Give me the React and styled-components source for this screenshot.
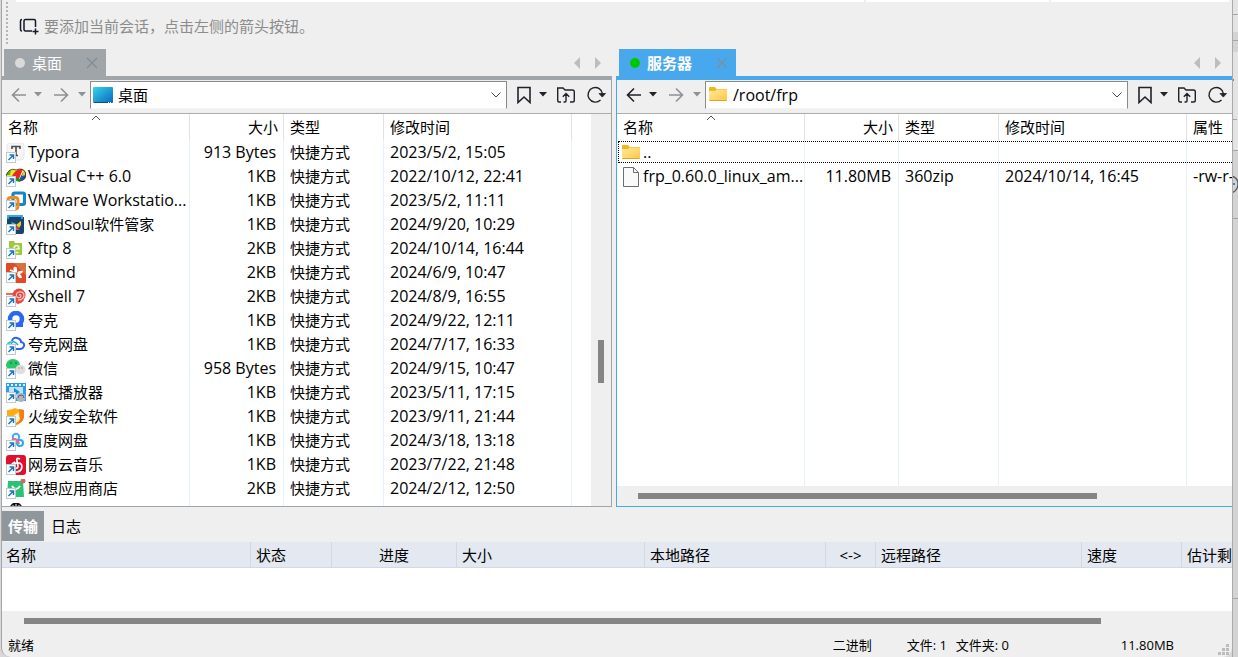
import React from "react";
import styled, { createGlobalStyle, css } from "styled-components";

const GlobalStyle = createGlobalStyle`
  * { box-sizing: border-box; }
  body { margin: 0; background: #d8d8d8; overflow: hidden; }
  button, select { font: inherit; color: inherit; }
`;

const Desktop = styled.div`
  display: flex;
  height: 100vh;
  padding-left: 1px;
  font: 15px/24px "Open Sans", "Noto Sans CJK SC", sans-serif;
  color: #000;
`;

const Window = styled.main`
  flex: 1;
  min-width: 0;
  display: flex;
  flex-direction: column;
  background: #efefef;
  border-left: 1px solid #a6a6a6;
  border-radius: 0 0 9px 9px;
  overflow: hidden;
`;

const Behind = styled.svg`
  flex: none;
  width: 6px;
  height: 657px;
`;

const TopStrip = styled.div`
  display: flex;
  gap: 2px;
  height: 2px;
  padding: 0 3px 0 14px;
`;

const StripPart = styled.div`
  flex: ${(p) => p.$grow};
  background: #fff;
`;

const SessionBar = styled.header`
  display: flex;
  align-items: center;
  gap: 4px;
  height: 47px;
  padding-left: 4px;
  color: #8c8c8c;
`;

const Grip = styled.span`
  align-self: flex-start;
  width: 2px;
  height: 43px;
  margin-right: 6px;
  background: repeating-linear-gradient(#b4b4b4 0 2px, transparent 2px 4px);
`;

const IconButton = styled.button`
  display: flex;
  align-items: center;
  justify-content: center;
  flex: none;
  width: ${(p) => p.$w}px;
  height: 24px;
  padding: 0;
  border: 0;
  background: none;
  color: ${(p) => (p.disabled ? "#8d9298" : "#20222a")};
`;

const Panes = styled.section`
  display: grid;
  grid-template-columns: 610fr 616fr;
  gap: 4px;
  flex: 1;
  min-height: 0;
`;

const Pane = styled.section`
  display: flex;
  flex-direction: column;
  min-width: 0;
  min-height: 0;
`;

const TabRow = styled.div`
  display: flex;
  align-items: center;
  justify-content: space-between;
  height: 27px;
  padding: 0 4px 0 ${(p) => p.$inset}px;
`;

const SessionTab = styled.div`
  display: flex;
  align-items: center;
  width: ${(p) => p.$w}px;
  height: 27px;
  padding: 1px 7px 0 11px;
  background: ${(p) => p.$color};
  color: #fff;
  font-weight: ${(p) => (p.$active ? 700 : 400)};
`;

const TabLabel = styled.button`
  display: flex;
  align-items: center;
  gap: 7px;
  flex: 1;
  padding: 0;
  border: 0;
  background: none;
`;

const Dot = styled.i`
  width: 10px;
  height: 10px;
  border-radius: 50%;
  background: ${(p) => p.$color};
`;

const TabNav = styled.div`
  display: flex;
  color: #bdbdbd;
  button { color: inherit; }
`;

const PaneBody = styled.div`
  display: flex;
  flex-direction: column;
  flex: 1;
  min-height: 0;
  border: solid ${(p) => p.$color};
  border-width: 4px ${(p) => (p.$active ? "0 1px 1px" : "1px 1px 0")};
`;

const AddressBar = styled.div`
  display: flex;
  align-items: center;
  height: 34px;
  padding: 0 0 4px 6px;
  border-bottom: 1px solid #adadad;
`;

const PathBox = styled.label`
  display: flex;
  align-items: center;
  gap: 5px;
  flex: 1;
  min-width: 0;
  height: 28px;
  margin: 1px 7px 0 2px;
  padding: 0 4px 0 2px;
  border: 1px solid #8a8a8a;
  border-bottom-color: #f4f4f4;
  background: #fff;
`;

const PathSelect = styled.select`
  appearance: none;
  flex: 1;
  min-width: 0;
  height: 26px;
  padding: 0;
  border: 0;
  background: none;
  font-size: ${(p) => (p.$latin ? 16 : 15)}px;
`;

const ListArea = styled.div`
  display: flex;
  flex: 1;
  min-height: 0;
  background: #fff;
`;

const ListClip = styled.div`
  flex: 1;
  min-width: 0;
  overflow: hidden;
`;

const FileTable = styled.table`
  table-layout: fixed;
  width: 670px;
  height: 100%;
  border-collapse: separate;
  border-spacing: 0;
  white-space: nowrap;
`;

const line = css`
  border-right: 1px solid ${(p) => (p.$plain ? "transparent" : p.$head ? "#e2e2e2" : "#e6f1fb")};
`;

const HeadCell = styled.th`
  position: relative;
  height: 26px;
  padding: 0 5px 0 6px;
  font-weight: 400;
  text-align: ${(p) => p.$align || "left"};
  ${line}
`;

const SortMark = styled.svg`
  position: absolute;
  top: 1px;
  left: calc(50% - 5px);
`;

const FileRow = styled.tr`
  ${(p) => p.$focused && "outline: 1px dotted #000; outline-offset: -2px;"}
`;

const Cell = styled.td`
  height: ${(p) => (p.$fill ? "auto" : "24px")};
  padding: 0 7px 0 6px;
  font-size: ${(p) => (p.$latin ? 16 : 15)}px;
  text-align: ${(p) => p.$align || "left"};
  overflow: hidden;
  ${line}
`;

const FileName = styled.div`
  display: flex;
  align-items: center;
  gap: 2px;
  height: 24px;
  margin: 0 -7px 0 -2px;
  svg { flex: none; margin-top: 2px; }
`;

const VScroll = styled.div`
  width: 20px;
  padding: 226px 7px 0;
  background: #efefef;
  &::before { content: ""; display: block; height: 43px; background: #858585; }
`;

const HScroll = styled.div`
  flex: none;
  height: 20px;
  padding: 7px ${(p) => p.$right} 7px ${(p) => p.$left}px;
  background: #efefef;
  &::before { content: ""; display: block; height: 6px; background: #858585; }
`;

const Transfers = styled.section`
  flex: none;
  padding-top: 4px;
`;

const ModeTabs = styled.div`
  display: flex;
  height: 31px;
`;

const ModeTab = styled.button`
  width: ${(p) => (p.$on ? 42 : 44)}px;
  height: 30px;
  padding: 0;
  border: 0;
  background: ${(p) => (p.$on ? "#8f969c" : "none")};
  color: ${(p) => (p.$on ? "#fff" : "#000")};
  font-weight: ${(p) => (p.$on ? 700 : 400)};
`;

const QueueArea = styled.div`
  height: 69px;
  overflow: hidden;
  background: #fff;
`;

const QueueTable = styled.table`
  table-layout: fixed;
  width: 1280px;
  border-collapse: separate;
  border-spacing: 0;
  white-space: nowrap;
`;

const QueueHead = styled.th`
  height: 26px;
  padding: 0 5px 0 ${(p) => (p.$first ? 4 : 5)}px;
  background: #e4e8f0;
  border: solid #d2d8e4;
  border-width: 0 1px 1px 0;
  font-weight: 400;
  text-align: ${(p) => p.$align || "left"};
`;

const StatusBar = styled.footer`
  position: relative;
  display: flex;
  flex: none;
  height: 26px;
  padding: 0 58px 0 6px;
  font-size: 13px;
  line-height: 28px;
`;

const Status = styled.span`
  width: ${(p) => (p.$w ? p.$w + "px" : "auto")};
  margin-left: ${(p) => (p.$push ? "auto" : 0)};
`;

const ResizeGrip = styled.svg`
  position: absolute;
  right: 2px;
  bottom: 1px;
`;

const Caret = () => <svg width="8" height="5"><path d="M0 0h8L4 4.6z" fill="currentColor" /></svg>;
const Arrow = ({ right }) => (
  <svg width="16" height="16" viewBox="0 0 16 16" fill="none" stroke="currentColor" strokeWidth="1.6">
    <path d={right ? "M1 8h13M8 1.5L14.5 8 8 14.5" : "M15 8H2M8 1.5L1.5 8 8 14.5"} />
  </svg>
);
const Close = () => <svg width="12" height="12"><path d="M1 1l10 10M11 1L1 11" stroke="#7f8d99" strokeWidth="1.3" /></svg>;
const Tri = ({ right }) => <svg width="8" height="12"><path d={right ? "M1 0v12l6-6z" : "M7 0v12L1 6z"} fill="currentColor" /></svg>;
const Chevron = () => <svg width="12" height="8" fill="none" stroke="#444"><path d="M1.500 1.500L6 6l4.500-4.500" /></svg>;
const Bookmark = () => <svg width="16" height="18" fill="none" stroke="currentColor" strokeWidth="1.6"><path d="M2 1.500h12v15l-6-5.500-6 5.500z" /></svg>;
const FolderUp = () => (
  <svg width="20" height="18" fill="none" stroke="currentColor" strokeWidth="1.4">
    <path d="M5 16H3Q1.700 16 1.700 14.500V2H7l2 2h7.500q1.800 0 1.800 1.800v8.400q0 1.800-1.800 1.800H14M7.500 16H9q1 0 1-1V8M6.800 10.800L10 7.600l3.200 3.200" />
  </svg>
);
const Refresh = () => (
  <svg width="20" height="18" fill="none" stroke="currentColor" strokeWidth="1.4">
    <path d="M14.500 14A7.300 7.300 0 1 1 16.600 8" />
    <path d="M13 7.500h6.500l-3.200 3.600z" fill="currentColor" strokeWidth=".8" />
  </svg>
);
const AddSession = () => (
  <svg width="20" height="18" fill="none" stroke="#17182a" strokeWidth="1.5">
    <path d="M3 2.500Q1.500 2.500 1.500 4v8.500Q1.500 14 3 14M13 14H6.500Q5 14 5 12.500V4Q5 2.500 6.500 2.500H15Q16.500 2.500 16.500 4v6M16.500 11.500v6M13.500 14.500h6" />
  </svg>
);
const Folder = () => (
  <svg width="20" height="20" viewBox="0 0 20 20">
    <defs><linearGradient id="fold" x2="1" y2="1"><stop stopColor="#ffe9a2" /><stop offset="1" stopColor="#ffc83d" /></linearGradient></defs>
    <path d="M1 3q0-1 1-1h5l1.500 2h9.500q1 0 1 1v10H1z" fill="#f5b61c" />
    <path d="M1 6h6l2-1.500h10V15q0 1-1 1H2q-1 0-1-1z" fill="url(#fold)" />
    <path d="M1.500 15.500h17" stroke="#dca32d" />
  </svg>
);
const DesktopIcon = () => (
  <svg width="20" height="16" viewBox="0 0 20 16">
    <defs><linearGradient id="desk" x2="1" y2="1"><stop stopColor="#35d5e8" /><stop offset="1" stopColor="#0867be" /></linearGradient></defs>
    <rect width="20" height="16" rx="1" fill="url(#desk)" /><path d="M1 15.500h18" stroke="#0b4f88" /><path d="M15 15.500h4" stroke="#fff" strokeDasharray="1 1" />
  </svg>
);

const art = {
  typora: <><rect x="1" y="0" width="17" height="17" rx="3" fill="#f6f6f6" stroke="#e8e8e8" /><path d="M6 6V3.500h8V6M10 3.500V12M8 12.500h4" stroke="#4b4b4b" strokeWidth="1.6" fill="none" /></>,
  vc: <><path d="M0 8Q2 2 9 2l3 3-6 6H1z" fill="#f2e527" /><path d="M0 8Q2 3 5 3l-1 5z" fill="#53b536" /><path d="M6 9q4-8 11-7l-4 10-4 1z" fill="#e82b16" /><path d="M14 11l4-8q4 4 1 9-2 2-5 2z" fill="#2451b4" /><path d="M16 9l1.500-7q3 3 2 6z" fill="#f2ce22" /><path d="M10 11l5 1-1 3-4-1z" fill="#21912a" /><path d="M0 9Q3 0 10 3q7-3 9.500 3 1 6-5.500 8" fill="none" stroke="#4b2a18" strokeWidth=".8" /></>,
  vmware: <><rect x="7" y="2" width="11.500" height="11.500" rx="1.500" fill="none" stroke="#1587c8" strokeWidth="3.200" /><path d="M12 9v6q0 3-3 3H5q-3 0-3-3V9q0-2.500 3-2.500h4.500q2.500 0 2.500 3" fill="none" stroke="#f38b1c" strokeWidth="3" /></>,
  wind: <><path d="M1 2h17v15q0 2-2 2H1z" fill="#17436f" /><path d="M2 4V1h14v3" stroke="#35a9df" strokeWidth="1.800" fill="none" /><path d="M5 7l5 2-2 4z" fill="#36b8df" /><path d="M15 6l-5 4 3 3 2-3z" fill="#fac829" /><path d="M10 11l4 4h-4z" fill="#e94c32" /><path d="M6 7l4 3-2 2z" fill="#7cba35" /></>,
  xftp: <><path d="M3 2h5l1 2h7v12H3z" fill="#9dca3b" /><path d="M8 10h5q0-3.500-2.500-3.500T8 10t2.500 3.500h2" fill="none" stroke="#eff9d2" strokeWidth="1.600" /></>,
  xmind: <><rect width="20" height="20" rx="1" fill="#e24a25" /><path d="M8 0h11q1 0 1 1v11z" fill="#d97949" opacity=".8" /><path d="M10 10Q6 7 8 4q4-1 3 5zm1 0q2-3 6-2 0 3-5 3zm0 1q4-1 5 4-4 1-5-4z" fill="#fff" /><path d="M9 9L4 7" stroke="#fff" strokeWidth="1.500" /></>,
  xshell: <><path d="M0 7h7" stroke="#f05742" strokeWidth="1.800" /><circle cx="13" cy="8" r="6.500" fill="#e64a40" /><path d="M8 11q0 5 4 6 8-2 6-9z" fill="#e64a40" /><path d="M13 8q2-1 2 1-1 3-4 1-2-4 2-5 5-1 5 4-1 4-6 4" fill="none" stroke="#f8cfc8" strokeWidth="1.100" /></>,
  quark: <><circle cx="10" cy="8" r="6" fill="none" stroke="#2868f3" strokeWidth="4.600" /><path d="M11 12h6v4h-6z" fill="#2868f3" /></>,
  cloud: <><path d="M6 6q1-4 5-3 4 1 4 4 4 1 3 4-1 3-4 3h-4" fill="none" stroke="#2b63ee" strokeWidth="2" /><path d="M5 9Q7 4 12 10" fill="none" stroke="#31a0e1" strokeWidth="1.500" /><path d="M1 13q0-6 5-6" fill="none" stroke="#31d0c1" strokeWidth="2" /></>,
  wechat: <><ellipse cx="7" cy="6" rx="7" ry="6" fill="#27c767" /><ellipse cx="14.500" cy="10.500" rx="5" ry="4.800" fill="#dedede" /><circle cx="5" cy="4" r=".8" fill="#086c30" /><circle cx="10" cy="4" r=".8" fill="#086c30" /><circle cx="13" cy="9" r=".7" fill="#888" /><circle cx="16" cy="9" r=".7" fill="#888" /></>,
  player: <><rect width="20" height="18" fill="#309be9" /><path d="M1 2h18" stroke="#dff3ff" strokeWidth="2" strokeDasharray="2 2" /><rect x="3" y="4" width="14" height="11" fill="#bce5ff" /><path d="M8 5l6 4-6 4z" fill="#168bd6" /><circle cx="15" cy="14.500" r="4.500" fill="#adb4b9" /><path d="M12 15a3 3 0 0 1 6 0" fill="none" stroke="#5c6468" /></>,
  fire: <><path d="M1 3q5 0 8-2 4 2 9 2v7q-1 6-9 9-7-4-8-9z" fill="#ffaa17" /><path d="M13 2l5 1v7q-1 6-9 8l5-7z" fill="#f57b18" /><path d="M6 13q0-4 7-8-1 4 1 6 0 4-5 5z" fill="#fff3c4" /></>,
  baidu: <><rect x="1" y="1" width="18" height="18" rx="3" fill="#fafcff" /><circle cx="10" cy="6" r="3.200" fill="none" stroke="#45a9ff" strokeWidth="2" /><circle cx="14" cy="12" r="3" fill="none" stroke="#31a6ed" strokeWidth="2" /><path d="M6 11q0-3 3-3 3 1 4 5" stroke="#f76975" strokeWidth="2" fill="none" /></>,
  music: <><rect width="20" height="20" rx="3" fill="#df102d" /><path d="M14 4q-4-2-3 2l1 5q0 3-3 2-2-3 1-5 6-1 6 4-1 5-6 5-6-1-5-6 1-3 4-4" fill="none" stroke="#fff" strokeWidth="1.700" /></>,
  store: <><path d="M2 2h15l1 16H1z" fill="#2ac273" /><path d="M6 7q4 6 8 0" fill="none" stroke="#fff" strokeWidth="2" /><circle cx="17" cy="2" r="2.500" fill="#c86d6a" /></>,
};

const AppIcon = ({ kind }) => (
  <svg width="20" height="20" viewBox="0 0 20 20">
    {art[kind]}
    <rect x=".5" y="9.500" width="9" height="10" fill="#fff" stroke="#bfc9d2" />
    <path d="M2.500 17L7 12.500M3.500 12h4v4" fill="none" stroke="#1976be" strokeWidth="1.500" />
  </svg>
);
const PartialIcon = () => <svg width="20" height="20" viewBox="0 0 20 20"><circle cx="10" cy="6" r="6.500" fill="#111" /><path d="M7 2v3M10 1v4M13 2v3" stroke="#fff" /></svg>;
const FileIcon = () => <svg width="20" height="20" viewBox="0 0 20 20"><path d="M2.500.5h10l5 5v14h-15z" fill="#fafafa" stroke="#6d6d6d" /><path d="M12.500.5v5h5" fill="none" stroke="#6d6d6d" /></svg>;

const files = [
  ["typora", "Typora", "913 Bytes", "2023/5/2, 15:05"],
  ["vc", "Visual C++ 6.0", "1KB", "2022/10/12, 22:41"],
  ["vmware", "VMware Workstatio...", "1KB", "2023/5/2, 11:11"],
  ["wind", "WindSoul软件管家", "1KB", "2024/9/20, 10:29"],
  ["xftp", "Xftp 8", "2KB", "2024/10/14, 16:44"],
  ["xmind", "Xmind", "2KB", "2024/6/9, 10:47"],
  ["xshell", "Xshell 7", "2KB", "2024/8/9, 16:55"],
  ["quark", "夸克", "1KB", "2024/9/22, 12:11"],
  ["cloud", "夸克网盘", "1KB", "2024/7/17, 16:33"],
  ["wechat", "微信", "958 Bytes", "2024/9/15, 10:47"],
  ["player", "格式播放器", "1KB", "2023/5/11, 17:15"],
  ["fire", "火绒安全软件", "1KB", "2023/9/11, 21:44"],
  ["baidu", "百度网盘", "1KB", "2024/3/18, 13:18"],
  ["music", "网易云音乐", "1KB", "2023/7/22, 21:48"],
  ["store", "联想应用商店", "2KB", "2024/2/12, 12:50"],
];

const isLatin = (s) => !/[\u4e00-\u9fff]/.test(s);

const Columns = ({ last }) => (
  <colgroup><col style={{ width: 188 }} /><col style={{ width: 94 }} /><col style={{ width: 100 }} /><col style={{ width: 188 }} /><col style={{ width: last }} /></colgroup>
);

const Header = ({ last }) => (
  <thead><tr>
    <HeadCell $head>名称<SortMark width="10" height="6"><path d="M1 5l4-4 4 4" fill="none" stroke="#555" /></SortMark></HeadCell>
    <HeadCell $head $align="right">大小</HeadCell>
    <HeadCell $head>类型</HeadCell>
    <HeadCell $head>修改时间</HeadCell>
    <HeadCell $head $plain>{last}</HeadCell>
  </tr></thead>
);

const Row = ({ icon, name, size, type, date, last, focused }) => (
  <FileRow $focused={focused}>
    <Cell $latin={isLatin(name)}><FileName>{icon}{name}</FileName></Cell>
    <Cell $latin $align="right">{size}</Cell>
    <Cell $latin={isLatin(type || "")}>{type}</Cell>
    <Cell $latin>{date}</Cell>
    <Cell $latin $plain>{last}</Cell>
  </FileRow>
);

const Filler = () => <tr><Cell $fill /><Cell $fill /><Cell $fill /><Cell $fill /><Cell $fill $plain /></tr>;

const Tabs = ({ title, color, dot, width, inset, active }) => (
  <TabRow $inset={inset}>
    <SessionTab $w={width} $color={color} $active={active}>
      <TabLabel><Dot $color={dot} />{title}</TabLabel>
      <IconButton $w={14} aria-label="关闭"><Close /></IconButton>
    </SessionTab>
    <TabNav>
      <IconButton $w={21} aria-label="上一个"><Tri /></IconButton>
      <IconButton $w={21} aria-label="下一个"><Tri right /></IconButton>
    </TabNav>
  </TabRow>
);

const Address = ({ icon, path, canGoBack }) => (
  <AddressBar>
    <IconButton $w={22} disabled={!canGoBack} aria-label="后退"><Arrow /></IconButton>
    <IconButton $w={16} disabled={!canGoBack} aria-label="后退记录"><Caret /></IconButton>
    <IconButton $w={30} disabled aria-label="前进"><Arrow right /></IconButton>
    <IconButton $w={12} disabled aria-label="前进记录"><Caret /></IconButton>
    <PathBox>
      {icon}
      <PathSelect $latin={isLatin(path)} aria-label="路径"><option>{path}</option></PathSelect>
      <Chevron />
    </PathBox>
    <IconButton $w={20} aria-label="书签"><Bookmark /></IconButton>
    <IconButton $w={18} aria-label="书签列表"><Caret /></IconButton>
    <IconButton $w={28} aria-label="上级目录"><FolderUp /></IconButton>
    <IconButton $w={31} aria-label="刷新"><Refresh /></IconButton>
  </AddressBar>
);

const queue = [
  ["名称", 249], ["状态", 81], ["进度", 125, "center"], ["大小", 188], ["本地路径", 181],
  ["<->", 50, "center"], ["远程路径", 206], ["速度", 100], ["估计剩余时间", 100],
];

export default function App() {
  return (
    <Desktop>
      <GlobalStyle />
      <Window>
        <TopStrip><StripPart $grow={849} /><StripPart $grow={183} /><StripPart $grow={178} /></TopStrip>
        <SessionBar>
          <Grip />
          <IconButton $w={22} aria-label="添加当前会话"><AddSession /></IconButton>
          <span>要添加当前会话，点击左侧的箭头按钮。</span>
        </SessionBar>
        <Panes>
          <Pane>
            <Tabs title="桌面" color="#a0a5a9" dot="#dadada" width={102} inset={2} />
            <PaneBody $color="#a0a5a9" $active={false}>
              <Address icon={<DesktopIcon />} path="桌面" />
              <ListArea>
                <ListClip>
                  <FileTable>
                    <Columns last={100} />
                    <Header />
                    <tbody>
                      {files.map(([kind, name, size, date]) => (
                        <Row key={name} icon={<AppIcon kind={kind} />} name={name} size={size} type="快捷方式" date={date} />
                      ))}
                      <Row icon={<PartialIcon />} name="" size="" type="" date="" />
                    </tbody>
                  </FileTable>
                </ListClip>
                <VScroll />
              </ListArea>
            </PaneBody>
          </Pane>
          <Pane>
            <Tabs title="服务器" color="#48a8ee" dot="#00c800" width={117} inset={3} active />
            <PaneBody $color="#48a8ee" $active>
              <Address icon={<Folder />} path="/root/frp" canGoBack />
              <ListArea>
                <ListClip>
                  <FileTable>
                    <Columns last={100} />
                    <Header last="属性" />
                    <tbody>
                      <Row icon={<Folder />} name=".." focused />
                      <Row icon={<FileIcon />} name="frp_0.60.0_linux_am..." size="11.80MB" type="360zip" date="2024/10/14, 16:45" last="-rw-r--r--" />
                      <Filler />
                    </tbody>
                  </FileTable>
                </ListClip>
              </ListArea>
              <HScroll $left={21} $right="22%" />
            </PaneBody>
          </Pane>
        </Panes>
        <Transfers>
          <ModeTabs><ModeTab $on>传输</ModeTab><ModeTab>日志</ModeTab></ModeTabs>
          <QueueArea>
            <QueueTable>
              <thead><tr>
                {queue.map(([label, width, align], i) => (
                  <QueueHead key={label} $first={i === 0} $align={align} style={{ width }}>{label}</QueueHead>
                ))}
              </tr></thead>
            </QueueTable>
          </QueueArea>
          <HScroll $left={22} $right="131px" />
        </Transfers>
        <StatusBar>
          <Status>就绪</Status>
          <Status $push $w={74}>二进制</Status>
          <Status $w={49}>文件: 1</Status>
          <Status $w={165}>文件夹: 0</Status>
          <Status>11.80MB</Status>
          <ResizeGrip width="12" height="12"><path d="M8 0h3v3H8zM4 4h3v3H4zM8 4h3v3H8zM0 8h3v3H0zM4 8h3v3H4zM8 8h3v3H8z" fill="#bcbcbc" /></ResizeGrip>
        </StatusBar>
      </Window>
      <Behind viewBox="0 0 6 657">
        <path d="M0 0h6v657H0z" fill="#d3d3d3" />
        <path d="M0 0h6v32H0zM0 52h6v98H0z" fill="#e4e4e4" />
        <path d="M0 14.500h6M0 40.500h6M0 119.500h5M0 150.500h6M0 218.500h6M0 598.500h6" stroke="#a5a5a5" />
        <path d="M0 71h1M0 80h2" stroke="#3cab91" strokeWidth="2" />
        <path d="M0 176q6 2 6 8t-6 9" fill="none" stroke="#555" strokeWidth="1.300" />
        <path d="M0 184h3" stroke="#2b8dd0" strokeWidth="2" />
        <path d="M.5 0v657" stroke="#aaa" />
      </Behind>
    </Desktop>
  );
}
